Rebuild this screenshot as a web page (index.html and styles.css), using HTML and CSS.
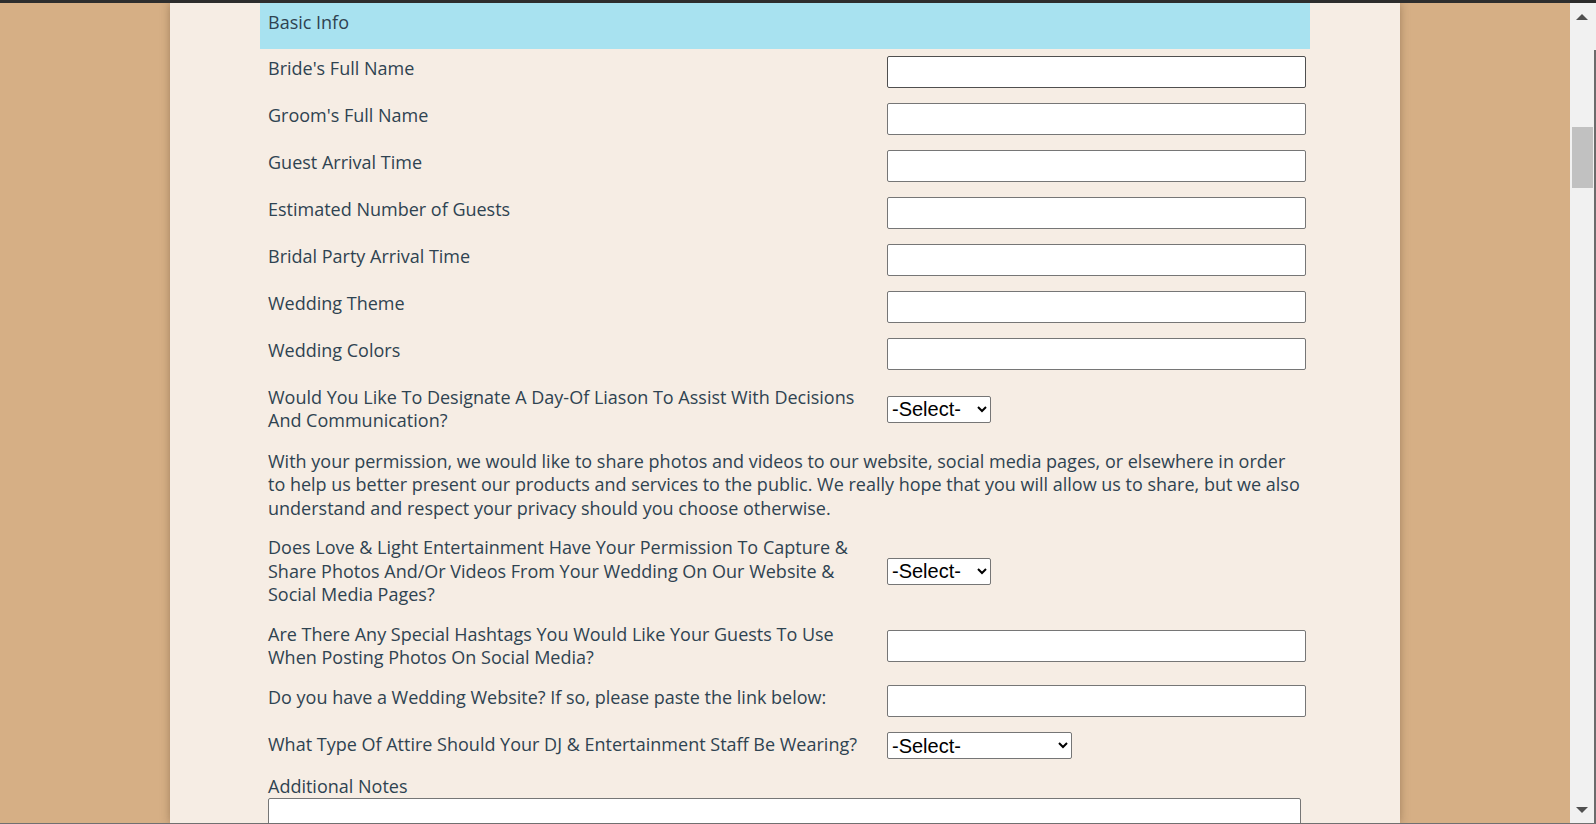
FILE: index.html
```html
<!DOCTYPE html>
<html lang="en">
<head>
<meta charset="utf-8">
<title>Wedding Planning Form</title>
<link rel="stylesheet" href="styles.css">
</head>
<body>
  <div class="topbar"></div>
  <div class="window">
    <div class="viewport">
      <div class="panel">
        <form class="form">
          <div class="section-head">Basic Info</div>
          <div class="rows">
            <div class="row">
              <label class="label">Bride's Full Name</label>
              <input class="text-input is-hover" type="text">
            </div>
            <div class="row">
              <label class="label">Groom's Full Name</label>
              <input class="text-input" type="text">
            </div>
            <div class="row">
              <label class="label">Guest Arrival Time</label>
              <input class="text-input" type="text">
            </div>
            <div class="row">
              <label class="label">Estimated Number of Guests</label>
              <input class="text-input" type="text">
            </div>
            <div class="row">
              <label class="label">Bridal Party Arrival Time</label>
              <input class="text-input" type="text">
            </div>
            <div class="row">
              <label class="label">Wedding Theme</label>
              <input class="text-input" type="text">
            </div>
            <div class="row">
              <label class="label">Wedding Colors</label>
              <input class="text-input" type="text">
            </div>
            <div class="row row--center row--tall row--lower">
              <label class="label">Would You Like To Designate A Day-Of Liason To Assist With Decisions And Communication?</label>
              <select class="select"><option>-Select-</option></select>
            </div>
            <p class="para">With your permission, we would like to share photos and videos to our website, social media pages, or elsewhere in order to help us better present our products and services to the public. We really hope that you will allow us to share, but we also understand and respect your privacy should you choose otherwise.</p>
            <div class="row row--center row--tall">
              <label class="label">Does Love &amp; Light Entertainment Have Your Permission To Capture &amp; Share Photos And/Or Videos From Your Wedding On Our Website &amp; Social Media Pages?</label>
              <select class="select"><option>-Select-</option></select>
            </div>
            <div class="row row--center row--tall-sm">
              <label class="label">Are There Any Special Hashtags You Would Like Your Guests To Use When Posting Photos On Social Media?</label>
              <input class="text-input" type="text">
            </div>
            <div class="row">
              <label class="label label--nudge">Do you have a Wedding Website? If so, please paste the link below:</label>
              <input class="text-input" type="text">
            </div>
            <div class="row row--center">
              <label class="label label--up">What Type Of Attire Should Your DJ &amp; Entertainment Staff Be Wearing?</label>
              <select class="select select--wide"><option>-Select-</option></select>
            </div>
            <div class="notes">
              <label class="label">Additional Notes</label>
              <textarea class="textarea"></textarea>
            </div>
          </div>
        </form>
      </div>
    </div>
    <div class="scrollbar">
      <div class="sb-bar">
        <div class="sb-btn">
          <svg width="12" height="6" viewBox="0 0 12 6"><polygon points="6,0 12,6 0,6" fill="#505050"/></svg>
        </div>
        <div class="sb-track"><div class="sb-thumb"></div></div>
        <div class="sb-btn">
          <svg width="12" height="6" viewBox="0 0 12 6"><polygon points="0,0 12,0 6,6" fill="#505050"/></svg>
        </div>
      </div>
      <div class="sb-edge"></div>
    </div>
  </div>
  <div class="bottombar"></div>
</body>
</html>
```
FILE: styles.css
```css
html, body {
  margin: 0;
  padding: 0;
}
body {
  width: 1596px;
  height: 824px;
  overflow: hidden;
  display: flex;
  flex-direction: column;
  font-family: "Open Sans", "Liberation Sans", sans-serif;
  color: #2f4351;
}
.topbar {
  height: 3px;
  flex: 0 0 3px;
  background: #2d2d2d;
}
.bottombar {
  height: 1px;
  flex: 0 0 1px;
  background: #707070;
}
.window {
  flex: 1 1 auto;
  min-height: 0;
  display: flex;
}
.viewport {
  flex: 1 1 auto;
  background: #d6af85;
  overflow: hidden;
  display: flex;
  justify-content: center;
}
.panel {
  width: 1230px;
  box-sizing: border-box;
  padding: 0 90px;
  background: #f6ede4;
  box-shadow: 0 0 9px rgba(60, 40, 20, 0.35);
  flex: 0 0 1230px;
}
.form {
  margin: 0;
}
.section-head {
  height: 46px;
  box-sizing: border-box;
  padding: 7.6px 8px 0;
  background: #a8e2f0;
  font-size: 18px;
  line-height: 23.4px;
}
.rows {
  padding: 7px 4px 0 8px;
  display: flex;
  flex-direction: column;
  gap: 15px;
}
.row {
  display: flex;
  align-items: flex-start;
}
.row--center {
  align-items: center;
}
.row--tall {
  margin-bottom: 1.4px;
}
.row--tall-sm {
  margin-bottom: 0.7px;
}
.row--lower {
  margin-top: 1px;
}
.label {
  flex: 0 0 610px;
  margin-right: 9px;
  font-size: 18px;
  line-height: 23.4px;
}
.row > .label {
  margin-top: 1px;
}
.row--center > .label {
  margin-top: 0;
}
.row > .label--nudge {
  margin-top: 0.6px;
}
.row--center > .label--up {
  margin-top: -3px;
}
.text-input {
  flex: 0 0 419px;
  width: 419px;
  height: 32px;
  box-sizing: border-box;
  margin: 0;
  border: 1px solid #767676;
  border-radius: 2px;
  background: #fff;
  padding: 1px 2px;
  font-family: "Liberation Sans", Arial, sans-serif;
  font-size: 16px;
}
.text-input.is-hover {
  border-color: #4f4f4f;
}
.select {
  flex: 0 0 auto;
  width: 104px;
  height: 27px;
  box-sizing: border-box;
  margin: 0;
  border: 1px solid #767676;
  border-radius: 2px;
  background: #fff;
  color: #000;
  font-family: "Liberation Sans", Arial, sans-serif;
  font-size: 20px;
}
.select--wide {
  width: 185px;
}
.para {
  margin: 0.6px 0 1.3px;
  font-size: 18px;
  line-height: 23.4px;
  width: 1034px;
}
.notes {
  display: flex;
  flex-direction: column;
  margin-top: 1px;
}
.notes .label {
  flex: 0 0 auto;
  margin-bottom: -1px;
}
.textarea {
  width: 1033px;
  height: 80px;
  box-sizing: border-box;
  margin: 0;
  border: 1px solid #767676;
  border-radius: 2px;
  background: #fff;
  resize: none;
}
.scrollbar {
  flex: 0 0 26px;
  display: flex;
}
.sb-bar {
  width: 24px;
  display: flex;
  flex-direction: column;
  background: #f1f1f1;
}
.sb-edge {
  width: 2px;
  background: linear-gradient(#f1f1f1 47px, #6b6b6b 47px);
}
.sb-btn {
  height: 27px;
  flex: 0 0 27px;
  display: flex;
  align-items: center;
  justify-content: center;
}
.sb-btn svg {
  display: block;
}
.sb-track {
  flex: 1 1 auto;
}
.sb-thumb {
  margin: 97px 1px 0 2px;
  height: 61px;
  background: #c1c1c1;
}
```
